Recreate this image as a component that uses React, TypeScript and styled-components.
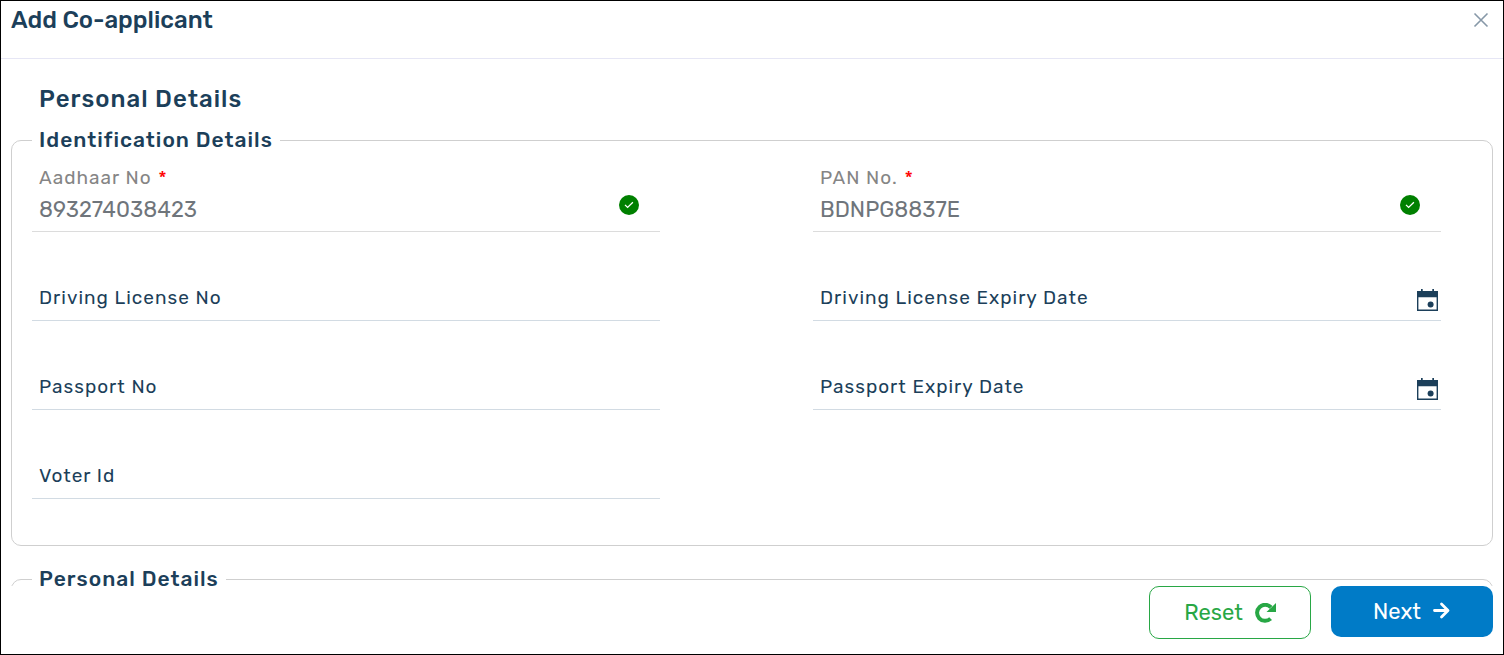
import React, { useId } from "react";
import styled, { createGlobalStyle } from "styled-components";

const navy = "#1c3f5a";

const GlobalStyle = createGlobalStyle`
  *, *::before, *::after { box-sizing: border-box; }
  body {
    margin: 0;
    background: #fff;
    color: ${navy};
    font-family: Rubik, Roboto, "Liberation Sans", sans-serif;
    font-weight: 400;
  }
`;

const Dialog = styled.main`
  display: flex;
  flex-direction: column;
  height: 100vh;
  border: 1px solid #000;
`;

const Header = styled.header`
  display: flex;
  justify-content: space-between;
  align-items: flex-start;
  padding: 3px 10px 22px;
  border-bottom: 1px solid #e6e6f5;
`;

const Title = styled.h1`
  margin: 0;
  font-size: 24px;
  line-height: 32px;
  font-weight: 500;
`;

const CloseButton = styled.button`
  display: flex;
  padding: 8px 4px;
  border: 0;
  background: none;
  color: #8798a8;
  cursor: pointer;
`;

const Body = styled.form`
  flex: 1;
  min-height: 0;
  overflow-y: auto;
  scrollbar-width: none;
  padding: 24px 10px 0;
`;

const SectionTitle = styled.h2`
  margin: 0 28px 10px;
  font-size: 24px;
  line-height: 32px;
  letter-spacing: 1px;
  font-weight: 500;
`;

const Group = styled.fieldset`
  min-width: 0;
  margin: 0 0 18px;
  padding: 0 51px 46px 20px;
  border: 1px solid #cfcfcf;
  border-radius: 10px;
`;

const GroupTitle = styled.legend`
  padding: 0 7px;
  font-size: 21px;
  line-height: 30px;
  letter-spacing: 1px;
  font-weight: 500;
`;

const Fields = styled.div`
  display: grid;
  grid-template-columns: 1fr 1fr;
  grid-auto-rows: 65px;
  gap: 24px 153px;
  padding-top: 12px;
`;

const FieldBox = styled.div<{ $verified: boolean }>`
  display: grid;
  grid-template-rows: ${(p) => (p.$verified ? "22px 42px" : "18px 46px")};
  border-bottom: 1px solid ${(p) => (p.$verified ? "#dcdcdc" : "#d2dbe3")};
`;

const FieldLabel = styled.label<{ $verified: boolean }>`
  grid-column: 1;
  grid-row: ${(p) => (p.$verified ? 1 : 2)};
  align-self: center;
  justify-self: start;
  padding: ${(p) => (p.$verified ? "0 0 0 7px" : "2px 0 0 7px")};
  font-size: 19px;
  line-height: 22px;
  letter-spacing: 1px;
  color: ${(p) => (p.$verified ? "#858585" : navy)};
  z-index: 1;
`;

const Required = styled.span`
  margin-left: 1px;
  color: #f00;
`;

const FieldInput = styled.input`
  grid-column: 1;
  grid-row: 2;
  width: 100%;
  padding: 0 50px 2px 7px;
  border: 0;
  outline: 0;
  background: none;
  font: inherit;
  font-size: 22px;
  color: #6f757b;
`;

const VerifiedMark = styled.svg`
  grid-column: 1;
  grid-row: 2;
  justify-self: end;
  margin: 6px 21px 0 0;
`;

const CalendarButton = styled.button`
  grid-column: 1;
  grid-row: 2;
  place-self: center end;
  display: flex;
  margin-top: 6px;
  padding: 0 3px;
  border: 0;
  background: none;
  color: ${navy};
  cursor: pointer;
`;

const Footer = styled.footer`
  display: flex;
  justify-content: flex-end;
  align-items: flex-start;
  gap: 20px;
  padding: 0 10px 15px;
`;

const ActionButton = styled.button<{ $primary?: boolean }>`
  display: flex;
  align-items: center;
  justify-content: center;
  gap: 12px;
  width: 162px;
  height: ${(p) => (p.$primary ? 51 : 53)}px;
  border: ${(p) => (p.$primary ? "0" : "1px solid #28a745")};
  border-radius: 10px;
  background: ${(p) => (p.$primary ? "#007bc7" : "#fff")};
  color: ${(p) => (p.$primary ? "#fff" : "#28a745")};
  font: inherit;
  font-size: 22px;
  cursor: pointer;
`;

type FieldProps = { label: string; value?: string; date?: boolean };

function Field({ label, value, date }: FieldProps) {
  const id = useId();
  const verified = value !== undefined;
  return (
    <FieldBox $verified={verified}>
      <FieldLabel htmlFor={id} $verified={verified}>
        {label}
        {verified && <Required> *</Required>}
      </FieldLabel>
      <FieldInput id={id} type="text" defaultValue={value} required={verified} />
      {verified && (
        <VerifiedMark width="20" height="20" viewBox="0 0 20 20" aria-hidden="true">
          <circle cx="10" cy="10" r="10" fill="#008000" />
          <path d="M6 9.900l2.600 2.500L13.900 7.300" fill="none" stroke="#fff" strokeWidth="1.300" />
        </VerifiedMark>
      )}
      {date && (
        <CalendarButton type="button" aria-label={`Choose ${label}`}>
          <svg width="21" height="24" viewBox="0 0 21 24" aria-hidden="true">
            <path
              fill="currentColor"
              fillRule="evenodd"
              d="M4 1h1.700v2h9.600V1H17v2h4v20H0V3h4zM1.400 9.200v12.400h18.200V9.200z"
            />
            <circle cx="13.600" cy="16.500" r="3" fill="currentColor" />
          </svg>
        </CalendarButton>
      )}
    </FieldBox>
  );
}

export default function App() {
  return (
    <Dialog role="dialog" aria-labelledby="dialog-title">
      <GlobalStyle />
      <Header>
        <Title id="dialog-title">Add Co-applicant</Title>
        <CloseButton type="button" aria-label="Close">
          <svg width="16" height="16" viewBox="0 0 16 16" aria-hidden="true">
            <path d="M1.500 1.500l13 13M14.500 1.500l-13 13" stroke="currentColor" strokeWidth="1.600" />
          </svg>
        </CloseButton>
      </Header>
      <Body id="co-applicant">
        <SectionTitle>Personal Details</SectionTitle>
        <Group>
          <GroupTitle>Identification Details</GroupTitle>
          <Fields>
            <Field label="Aadhaar No" value="893274038423" />
            <Field label="PAN No." value="BDNPG8837E" />
            <Field label="Driving License No" />
            <Field label="Driving License Expiry Date" date />
            <Field label="Passport No" />
            <Field label="Passport Expiry Date" date />
            <Field label="Voter Id" />
          </Fields>
        </Group>
        <Group>
          <GroupTitle>Personal Details</GroupTitle>
        </Group>
      </Body>
      <Footer>
        <ActionButton type="reset" form="co-applicant">
          Reset
          <svg width="21" height="20" viewBox="0 0 21 20" aria-hidden="true">
            <path
              d="M16 4.400A8 8 0 1 0 15.600 15.600"
              fill="none"
              stroke="currentColor"
              strokeWidth="4"
            />
            <path d="M21 0V9H11.500z" fill="currentColor" />
          </svg>
        </ActionButton>
        <ActionButton type="submit" form="co-applicant" $primary>
          Next
          <svg width="18" height="20" viewBox="0 0 18 20" aria-hidden="true">
            <path
              d="M1.500 8.500h13M8.500 2l6.500 6.500-6.500 6.500"
              fill="none"
              stroke="currentColor"
              strokeWidth="2.800"
              strokeLinecap="round"
              strokeLinejoin="round"
            />
          </svg>
        </ActionButton>
      </Footer>
    </Dialog>
  );
}
